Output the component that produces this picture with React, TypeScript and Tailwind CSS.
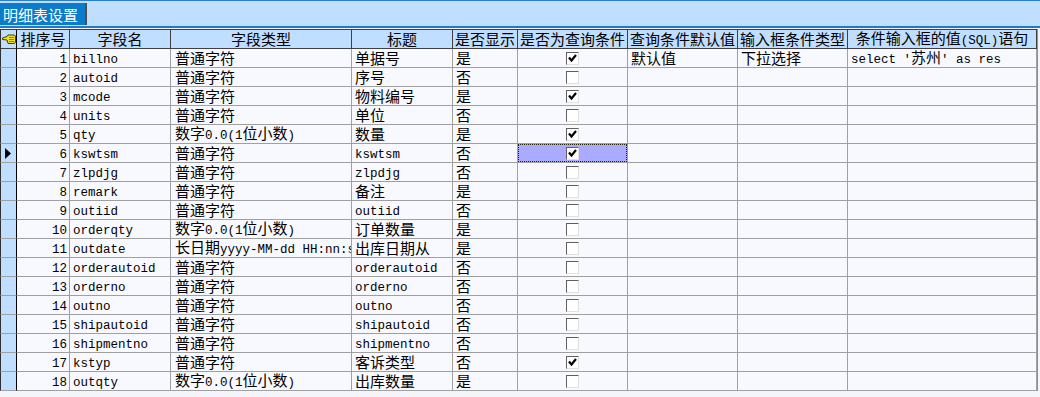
import React from "react";

const COLS = "17px 53px 101px 181px 101px 65px 110px 110px 110px 189px";

type Row = {
  n: number;
  name: string;
  type: string;
  title: string;
  show: string;
  q: boolean;
  def?: string;
  kind?: string;
  sql?: string;
};

const rows: Row[] = [
  { n: 1, name: "billno", type: "普通字符", title: "单据号", show: "是", q: true, def: "默认值", kind: "下拉选择", sql: "select '苏州' as res" },
  { n: 2, name: "autoid", type: "普通字符", title: "序号", show: "否", q: false },
  { n: 3, name: "mcode", type: "普通字符", title: "物料编号", show: "是", q: true },
  { n: 4, name: "units", type: "普通字符", title: "单位", show: "否", q: false },
  { n: 5, name: "qty", type: "数字0.0(1位小数)", title: "数量", show: "是", q: true },
  { n: 6, name: "kswtsm", type: "普通字符", title: "kswtsm", show: "否", q: true },
  { n: 7, name: "zlpdjg", type: "普通字符", title: "zlpdjg", show: "否", q: false },
  { n: 8, name: "remark", type: "普通字符", title: "备注", show: "是", q: false },
  { n: 9, name: "outiid", type: "普通字符", title: "outiid", show: "否", q: false },
  { n: 10, name: "orderqty", type: "数字0.0(1位小数)", title: "订单数量", show: "是", q: false },
  { n: 11, name: "outdate", type: "长日期yyyy-MM-dd HH:nn:ss", title: "出库日期从", show: "是", q: false },
  { n: 12, name: "orderautoid", type: "普通字符", title: "orderautoid", show: "否", q: false },
  { n: 13, name: "orderno", type: "普通字符", title: "orderno", show: "否", q: false },
  { n: 14, name: "outno", type: "普通字符", title: "outno", show: "否", q: false },
  { n: 15, name: "shipautoid", type: "普通字符", title: "shipautoid", show: "否", q: false },
  { n: 16, name: "shipmentno", type: "普通字符", title: "shipmentno", show: "否", q: false },
  { n: 17, name: "kstyp", type: "普通字符", title: "客诉类型", show: "否", q: true },
  { n: 18, name: "outqty", type: "数字0.0(1位小数)", title: "出库数量", show: "是", q: false },
];

function Txt({ s }: { s: string }) {
  const parts = s.match(/[\x20-\x7e]+|[^\x20-\x7e]+/g) || [];
  return (
    <span className="whitespace-pre leading-[16px] block">
      {parts.map((p, i) =>
        /^[\x20-\x7e]+$/.test(p) ? (
          <span key={i} className="font-['Liberation_Mono',monospace] text-[12.5px] leading-[16px]">
            {p}
          </span>
        ) : (
          <span key={i} className="font-['Noto_Sans_CJK_SC',sans-serif] text-[15px] leading-[16px]">
            {p}
          </span>
        )
      )}
    </span>
  );
}

function Check({ on }: { on: boolean }) {
  return (
    <div className="w-[13px] h-[13px] bg-white border-t border-l border-[#606060] border-r border-b border-r-[#e0e0e0] border-b-[#e0e0e0] flex items-center justify-center">
      {on && (
        <svg width="9" height="9" viewBox="0 0 9 9">
          <path d="M1 3.5 L3.5 6.5 L8 1" stroke="#000" strokeWidth="2.2" fill="none" />
        </svg>
      )}
    </div>
  );
}

function Hand() {
  return (
    <svg width="14" height="10" viewBox="0 0 14 10">
      <path d="M0.5 4 L5 2.5 L6 1 L12 1 L13.5 2 L13.5 8.5 L12 9.5 L6 9.5 L5 6 L0.5 5.5 Z" fill="#f0e020" stroke="#404000" strokeWidth="1" />
      <path d="M7 3.5 L12 3.5 M7 5.5 L12 5.5 M7 7.5 L12 7.5" stroke="#806000" strokeWidth="0.8" />
    </svg>
  );
}

const headers = ["排序号", "字段名", "字段类型", "标题", "是否显示", "是否为查询条件", "查询条件默认值", "输入框条件类型", "条件输入框的值(SQL)语句"];

export default function App() {
  return (
    <div className="w-[1040px] h-[397px] bg-[#f3f5fb] overflow-hidden text-black">
      {/* tab strip */}
      <div className="h-[28px] bg-[#c0deff] border-t border-[#2a7fd0] border-b-2 border-b-[#2478c8] pt-[2px]">
        <div className="w-[87px] h-[22px] bg-[#0a7cca] border-r-2 border-r-[#505050] flex items-center pl-[3px] text-white">
          <span className="font-['Noto_Sans_CJK_SC',sans-serif] text-[15px] leading-none">明细表设置</span>
        </div>
      </div>
      {/* grid */}
      <div className="w-[1038px] mt-[1px] border-r border-[#909090]">
        <div className="grid h-[20px] border-t border-[#404040]" style={{ gridTemplateColumns: COLS }}>
          <div className="bg-[#c0deff] border-l border-l-[#303030] border-r border-r-black border-b border-b-[#404040] flex items-center justify-center">
            <Hand />
          </div>
          {headers.map((h, i) => (
            <div key={i} className="bg-[#c0deff] border-r border-r-[#404040] border-b border-b-[#404040] flex items-center justify-center whitespace-nowrap overflow-hidden">
              <Txt s={h} />
            </div>
          ))}
        </div>
        {rows.map((r) => {
          const cell = "bg-[#f7f9ff] border-r border-b border-[#a0a0a0] flex items-center whitespace-nowrap overflow-hidden";
          const sel = r.n === 6;
          return (
            <div key={r.n} className="grid h-[19px]" style={{ gridTemplateColumns: COLS }}>
              <div className="bg-[#c0deff] border-l border-l-[#303030] border-r border-r-black border-b border-b-[#a0a0a0] flex items-center pl-[4px]">
                {sel && (
                  <svg width="7" height="11" viewBox="0 0 7 11">
                    <path d="M0 0 L6 5.5 L0 11 Z" fill="#000" />
                  </svg>
                )}
              </div>
              <div className={`${cell} justify-end pr-[2px]`}>
                <Txt s={String(r.n)} />
              </div>
              <div className={`${cell} pl-[3px]`}>
                <Txt s={r.name} />
              </div>
              <div className={`${cell} pl-[4px]`}>
                <Txt s={r.type} />
              </div>
              <div className={`${cell} pl-[3px]`}>
                <Txt s={r.title} />
              </div>
              <div className={`${cell} pl-[3px]`}>
                <Txt s={r.show} />
              </div>
              <div className={`${cell} justify-center`}>
                {sel ? (
                  <div className="w-full h-full bg-[#aaaaff] border border-dotted border-[#202000] flex items-center justify-center">
                    <Check on={r.q} />
                  </div>
                ) : (
                  <Check on={r.q} />
                )}
              </div>
              <div className={`${cell} pl-[3px]`}>{r.def && <Txt s={r.def} />}</div>
              <div className={`${cell} pl-[3px]`}>{r.kind && <Txt s={r.kind} />}</div>
              <div className={`${cell} pl-[3px]`}>{r.sql && <Txt s={r.sql} />}</div>
            </div>
          );
        })}
      </div>
    </div>
  );
}
